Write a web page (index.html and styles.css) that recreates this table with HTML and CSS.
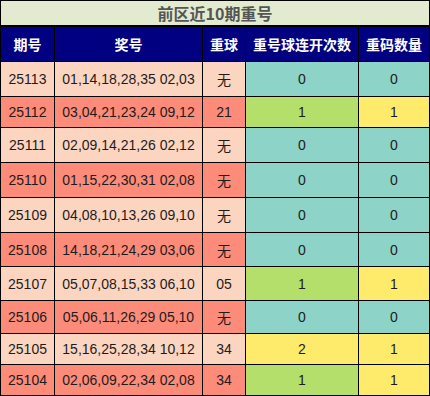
FILE: index.html
```html
<!DOCTYPE html>
<html lang="zh">
<head>
<meta charset="utf-8">
<link rel="stylesheet" href="styles.css">
</head>
<body>
<div class="sheet">
  <div class="title">前区近10期重号</div>
  <div class="hd">期号</div><div class="hd">奖号</div><div class="hd">重球</div><div class="hd">重号球连开次数</div><div class="hd">重码数量</div>

  <div class="c lt">25113</div><div class="c lt">01,14,18,28,35 02,03</div><div class="c lt cjk">无</div><div class="c teal">0</div><div class="c teal">0</div>
  <div class="c dk">25112</div><div class="c dk">03,04,21,23,24 09,12</div><div class="c dk">21</div><div class="c green">1</div><div class="c yellow">1</div>
  <div class="c lt">25111</div><div class="c lt">02,09,14,21,26 02,12</div><div class="c lt cjk">无</div><div class="c teal">0</div><div class="c teal">0</div>
  <div class="c dk">25110</div><div class="c dk">01,15,22,30,31 02,08</div><div class="c dk cjk">无</div><div class="c teal">0</div><div class="c teal">0</div>
  <div class="c lt">25109</div><div class="c lt">04,08,10,13,26 09,10</div><div class="c lt cjk">无</div><div class="c teal">0</div><div class="c teal">0</div>
  <div class="c dk">25108</div><div class="c dk">14,18,21,24,29 03,06</div><div class="c dk cjk">无</div><div class="c teal">0</div><div class="c teal">0</div>
  <div class="c lt">25107</div><div class="c lt">05,07,08,15,33 06,10</div><div class="c lt">05</div><div class="c green">1</div><div class="c yellow">1</div>
  <div class="c dk">25106</div><div class="c dk">05,06,11,26,29 05,10</div><div class="c dk cjk">无</div><div class="c teal">0</div><div class="c teal">0</div>
  <div class="c lt">25105</div><div class="c lt">15,16,25,28,34 10,12</div><div class="c lt">34</div><div class="c yellow">2</div><div class="c yellow">1</div>
  <div class="c dk">25104</div><div class="c dk">02,06,09,22,34 02,08</div><div class="c dk">34</div><div class="c green">1</div><div class="c yellow">1</div>
</div>
</body>
</html>
```

FILE: styles.css
```css
html, body {
  margin: 0;
  padding: 0;
  background: #ffffff;
}

.sheet {
  width: 430px;
  height: 396px;
  box-sizing: border-box;
  background: #000000;
  padding: 1px;
  display: grid;
  grid-template-columns: 53px 147px 42px 112px 70px;
  grid-template-rows: 25px 34px 34px 30px 34px 34px 34px 33px 33px 32px 30px 30px;
  gap: 1px;
  font-family: "Liberation Sans", "Noto Sans CJK SC", sans-serif;
  font-size: 14px;
  color: #1c1c1c;
}

.title {
  grid-column: 1 / -1;
  background: #e2ebcf;
  border-bottom: 1px solid #000000;
  display: flex;
  align-items: center;
  justify-content: center;
  font-family: "Noto Sans CJK SC", sans-serif;
  font-weight: 700;
  font-size: 16px;
  color: #555555;
  line-height: 1;
}

.hd {
  background: #000080;
  color: #ffffff;
  display: flex;
  align-items: center;
  justify-content: center;
  font-family: "Noto Sans CJK SC", sans-serif;
  font-weight: 700;
  font-size: 14px;
  line-height: 1;
  white-space: nowrap;
}

.c {
  display: flex;
  align-items: center;
  justify-content: center;
  line-height: 1;
  white-space: nowrap;
}

.cjk {
  font-family: "Noto Sans CJK SC", sans-serif;
}

.lt { background: #fcd5c1; }
.dk { background: #fd8b79; }
.teal { background: #8dd3c7; }
.green { background: #b4df6b; }
.yellow { background: #ffeb6b; }
```
